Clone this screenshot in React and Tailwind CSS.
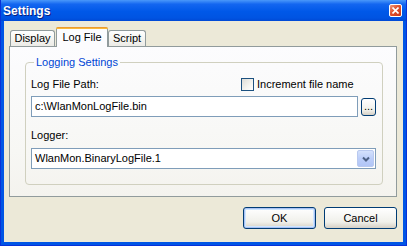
export default function App() {
  return (
    <div className="w-[407px] h-[246px] bg-[#0055e5] flex flex-col font-['Liberation_Sans',Arial,sans-serif] text-[11px] text-black select-none border-l border-r border-b border-[#0831d9]">
      {/* Title bar */}
      <div className="h-[21px] flex items-center justify-between pl-[2px] pr-[4px] bg-[linear-gradient(to_bottom,#4a98fa,#1366f0_20%,#0058e8_55%,#0054e2_85%,#0049d5)]">
        <span className="text-white font-bold text-[12px] leading-none [text-shadow:1px_1px_#0a1e80]">Settings</span>
        <div className="w-[13px] h-[13px] rounded-[2px] border border-white bg-[linear-gradient(135deg,#f09a7e,#e0512c_45%,#c7361a)] flex items-center justify-center">
          <svg width="7" height="7" viewBox="0 0 7 7">
            <path d="M0.5 0.5 L6.5 6.5 M6.5 0.5 L0.5 6.5" stroke="#fff" strokeWidth="1.6" />
          </svg>
        </div>
      </div>

      {/* Client area */}
      <div className="flex-1 mx-[3px] mb-[3px] bg-[#ece9d8] flex flex-col pt-[6px] pl-[5px] pr-[6px]">
        {/* Tabs */}
        <div className="h-[19px] flex items-end">
          <div className="ml-[1px] w-[45px] h-[16px] flex items-center justify-center border border-b-0 border-[#919b9c] rounded-t-[3px] bg-[linear-gradient(to_bottom,#ffffff,#f3f3ef_60%,#ecebe6)]">
            Display
          </div>
          <div className="ml-[1px] w-[52px] h-[20px] -mb-px relative z-10 flex flex-col border-x border-[#919b9c] rounded-t-[3px] bg-[#fcfcfe]">
            <div className="h-[3px] rounded-t-[2px] bg-[linear-gradient(to_bottom,#e68b2c,#ffc83c)] -mx-px" />
            <div className="flex-1 flex items-center justify-center pb-[2px]">Log File</div>
          </div>
          <div className="w-[38px] h-[16px] flex items-center justify-center border border-b-0 border-[#919b9c] rounded-t-[3px] bg-[linear-gradient(to_bottom,#ffffff,#f3f3ef_60%,#ecebe6)]">
            Script
          </div>
        </div>

        {/* Tab panel */}
        <div className="h-[151px] border border-[#919b9c] bg-[linear-gradient(to_bottom,#fcfcfe,#f7f7f4_70%,#f4f3ee)] pt-[9px] pl-[15px] pr-[13px]">
          <fieldset className="border border-[#d0d0bf] rounded-[4px] pl-[5px] pr-[6px] pb-[15px]">
            <legend className="ml-[3px] px-[2px] text-[#0046d5] leading-[13px]">Logging Settings</legend>

            <div className="mt-[9px] h-[13px] flex items-center">
              <span className="w-[210px]">Log File Path:</span>
              <div className="flex items-center gap-[3px]">
                <div className="w-[13px] h-[13px] border border-[#1c5180] bg-[linear-gradient(135deg,#dcdcd7,#f4f4f0_60%,#ffffff)]" />
                <span>Increment file name</span>
              </div>
            </div>

            <div className="mt-[5px] flex items-center gap-[3px]">
              <div className="flex-1 h-[21px] border border-[#7f9db9] bg-white flex items-center pl-[3px]">
                c:\WlanMonLogFile.bin
              </div>
              <div className="w-[15px] h-[18px] rounded-[3px] border border-[#003c74] bg-[linear-gradient(to_bottom,#ffffff,#f0f0ea_70%,#d6d0c5)] flex items-end justify-center pb-[3px] leading-none">
                ...
              </div>
            </div>

            <div className="mt-[12px] h-[13px] flex items-center">Logger:</div>

            <div className="mt-[6px] h-[21px] border border-[#7f9db9] bg-white flex items-center pl-[3px] pr-px">
              <span className="flex-1">WlanMon.BinaryLogFile.1</span>
              <div className="w-[17px] h-[17px] rounded-[2px] border border-[#b9c9ef] bg-[linear-gradient(to_bottom,#d4e1fc,#bccef9_50%,#b1c5f6)] flex items-center justify-center">
                <svg width="8" height="6" viewBox="0 0 8 6">
                  <path d="M1 1.5 L4 4.5 L7 1.5" fill="none" stroke="#4d6185" strokeWidth="2" />
                </svg>
              </div>
            </div>
          </fieldset>
        </div>

        {/* Buttons */}
        <div className="mt-[10px] flex justify-end gap-[8px]">
          <button className="w-[73px] h-[22px] rounded-[3px] border border-[#003c74] bg-[linear-gradient(to_bottom,#ffffff,#f0f0ea_70%,#d6d0c5)] shadow-[inset_0_0_0_1px_#a9c1f4,inset_0_0_0_2px_#cee7ff]">
            OK
          </button>
          <button className="w-[73px] h-[22px] rounded-[3px] border border-[#003c74] bg-[linear-gradient(to_bottom,#ffffff,#f0f0ea_70%,#d6d0c5)]">
            Cancel
          </button>
        </div>
      </div>
    </div>
  )
}
